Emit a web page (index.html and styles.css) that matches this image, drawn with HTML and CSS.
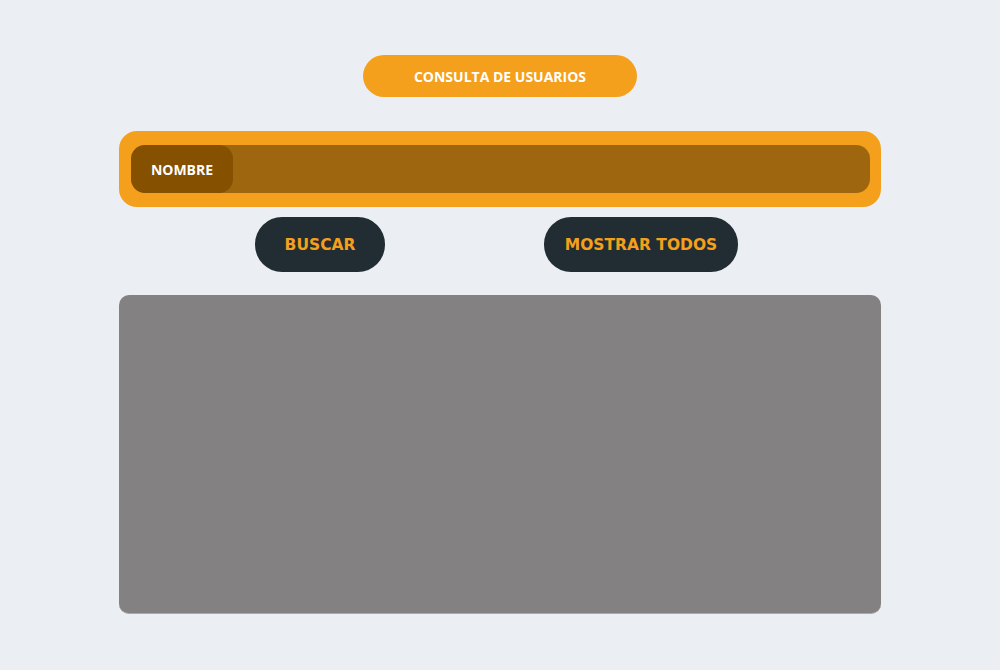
FILE: index.html
```html
<!DOCTYPE html>
<html lang="es">
<head>
<meta charset="utf-8">
<title>Consulta de usuarios</title>
<link rel="stylesheet" href="styles.css">
</head>
<body>
<main class="page">
  <div class="title-row"><h1 class="title">CONSULTA DE USUARIOS</h1></div>
  <div class="search-box">
    <div class="search-field">
      <label class="search-label" for="nombre">NOMBRE</label>
      <input class="search-input" id="nombre" type="text">
    </div>
  </div>
  <div class="actions">
    <button class="btn btn-search">BUSCAR</button>
    <button class="btn btn-all">MOSTRAR TODOS</button>
  </div>
  <div class="results"></div>
</main>
</body>
</html>
```
FILE: styles.css
```css
* { box-sizing: border-box; }
html, body { margin: 0; padding: 0; }
body {
  background: #ebeff4;
  font-family: "Open Sans", "Liberation Sans", sans-serif;
  width: 1000px;
  height: 670px;
  overflow: hidden;
}
.page {
  width: 762px;
  margin: 0 auto;
  padding-top: 55px;
  display: flex;
  flex-direction: column;
}
.title-row {
  display: flex;
  justify-content: center;
}
.title {
  margin: 0;
  width: 274px;
  height: 42px;
  border-radius: 21px;
  background: #f4a01c;
  color: #fff;
  font-size: 14px;
  font-weight: 700;
  display: flex;
  align-items: center;
  justify-content: center;
}
.search-box {
  margin-top: 34px;
  height: 76px;
  background: #f4a01c;
  border-radius: 18px;
  padding: 14px 11px 14px 12px;
}
.search-field {
  height: 48px;
  display: flex;
  background: #9e660f;
  border-radius: 14px;
  overflow: hidden;
}
.search-label {
  width: 102px;
  background: #855000;
  border-radius: 14px;
  color: #fff;
  font-size: 14px;
  font-weight: 700;
  display: flex;
  align-items: center;
  justify-content: center;
}
.search-input {
  flex: 1;
  border: 0;
  background: transparent;
  outline: none;
}
.actions {
  margin-top: 10px;
  display: flex;
  gap: 159px;
  padding-left: 136px;
}
.btn {
  height: 55px;
  border: 0;
  border-radius: 27px;
  background: #212d33;
  color: #f4a01c;
  font-family: "DejaVu Sans", sans-serif;
  font-weight: 700;
  font-size: 15.5px;
  padding: 3px 0 0 0;
  line-height: 1;
}
.btn-search { width: 130px; }
.btn-all { width: 194px; }
.results {
  margin-top: 23px;
  height: 319px;
  background: #838181;
  border-radius: 10px;
  border-bottom: 1px solid #a9a9ab;
}
```
